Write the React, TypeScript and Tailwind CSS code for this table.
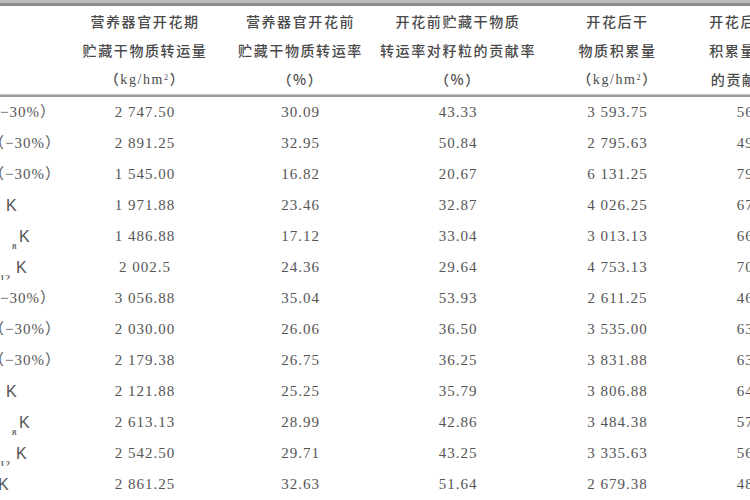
import React from 'react';

type Row = {
  label: 'pct0' | 'pct' | 'k' | 'sk' | 'k0';
  sub?: string;
  values: string[];
};

// 表格数据
const rows: Row[] = [
  { label: 'pct0', values: ['2 747.50', '30.09', '43.33', '3 593.75', '56.67'] },
  { label: 'pct', values: ['2 891.25', '32.95', '50.84', '2 795.63', '49.16'] },
  { label: 'pct', values: ['1 545.00', '16.82', '20.67', '6 131.25', '79.33'] },
  { label: 'k', values: ['1 971.88', '23.46', '32.87', '4 026.25', '67.13'] },
  { label: 'sk', sub: '8', values: ['1 486.88', '17.12', '33.04', '3 013.13', '66.96'] },
  { label: 'sk', sub: '12', values: ['2 002.5', '24.36', '29.64', '4 753.13', '70.36'] },
  { label: 'pct0', values: ['3 056.88', '35.04', '53.93', '2 611.25', '46.07'] },
  { label: 'pct', values: ['2 030.00', '26.06', '36.50', '3 535.00', '63.50'] },
  { label: 'pct', values: ['2 179.38', '26.75', '36.25', '3 831.88', '63.75'] },
  { label: 'k', values: ['2 121.88', '25.25', '35.79', '3 806.88', '64.21'] },
  { label: 'sk', sub: '8', values: ['2 613.13', '28.99', '42.86', '3 484.38', '57.14'] },
  { label: 'sk', sub: '12', values: ['2 542.50', '29.71', '43.25', '3 335.63', '56.75'] },
  { label: 'k0', values: ['2 861.25', '32.63', '51.64', '2 679.38', '48.36'] },
];

const colWidths = ['w-[154px]', 'w-[157px]', 'w-[158px]', 'w-[161px]', 'w-[116px]'];

// 表头三行
const headers: React.ReactNode[][] = [
  ['营养器官开花期', '贮藏干物质转运量', <>（kg/hm<sup className="text-[8px]">2</sup>）</>],
  ['营养器官开花前', '贮藏干物质转运率', '（%）'],
  ['开花前贮藏干物质', '转运率对籽粒的贡献率', '（%）'],
  ['开花后干', '物质积累量', <>（kg/hm<sup className="text-[8px]">2</sup>）</>],
  ['开花后干物质', '积累量对籽粒', '的贡献率(%)'],
];

const serif = "font-['Liberation_Serif','Noto_Sans_CJK_SC',serif]";
const cjk = "font-['Noto_Sans_CJK_SC',sans-serif]";
const kFont = "font-['Liberation_Sans',sans-serif] text-[16px]";

function Label({ row }: { row: Row }) {
  if (row.label === 'pct0') return <span className="ml-[-16px]">（−30%）</span>;
  if (row.label === 'pct') return <span className="ml-[-11px]">（−30%）</span>;
  if (row.label === 'k') return <span className={`ml-[6px] ${kFont}`}>K</span>;
  if (row.label === 'k0') return <span className={`ml-[-2px] ${kFont}`}>K</span>;
  const small = row.sub === '8';
  return (
    <span className="flex items-end">
      <span
        className={`${small ? 'ml-[12px] w-[6px]' : 'ml-[0px] w-[15px]'} text-[9px] leading-none font-bold text-[#666] translate-y-[3px]`}
      >
        {row.sub}
      </span>
      <span className={`${small ? 'ml-[1px]' : 'ml-[1px]'} ${kFont}`}>K</span>
    </span>
  );
}

export default function App() {
  return (
    <div className="w-[750px] h-[500px] overflow-hidden bg-white text-[#555]">
      <div className="h-[3px] bg-[#bdbdbd]" />
      <div className="h-[3px] bg-[#8c8c8c]" />

      {/* 表头 */}
      <div className="flex h-[88px] pt-[1px]">
        <div className="w-[68px] shrink-0" />
        {headers.map((lines, i) => (
          <div key={i} className={`${colWidths[i]} shrink-0 flex flex-col items-center`}>
            {lines.map((l, j) => (
              <div
                key={j}
                className={`h-[29px] leading-[29px] whitespace-nowrap text-[14px] tracking-[1.6px] font-medium text-[#4a4a4a] ${j === 2 && typeof l !== 'string' ? serif : cjk}`}
              >
                {l}
              </div>
            ))}
          </div>
        ))}
      </div>
      <div className="h-[1px] bg-[#c4c4c4]" />
      <div className="h-[2px] bg-[#9a9a9a]" />

      {/* 数据行 */}
      {rows.map((row, i) => (
        <div key={i} className={`flex h-[31px] items-center ${serif} text-[15px] tracking-[1px]`}>
          <div className="w-[68px] shrink-0 overflow-hidden whitespace-nowrap flex items-center">
            <Label row={row} />
          </div>
          {row.values.map((v, j) => (
            <div key={j} className={`${colWidths[j]} shrink-0 text-center whitespace-nowrap`}>
              {v}
            </div>
          ))}
        </div>
      ))}
    </div>
  );
}
